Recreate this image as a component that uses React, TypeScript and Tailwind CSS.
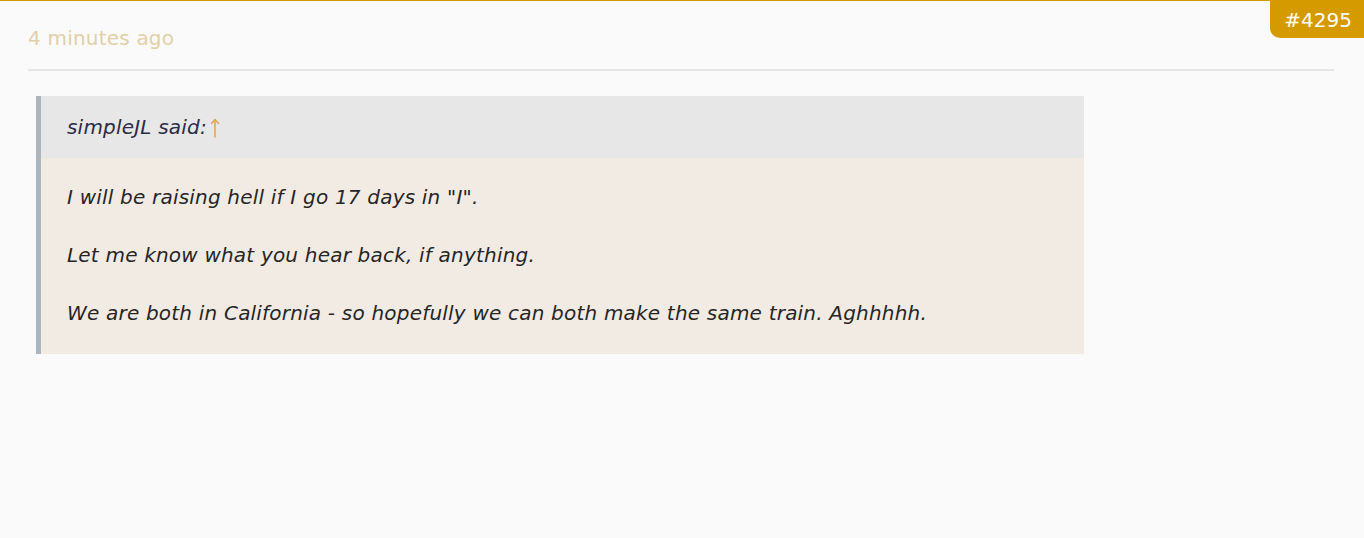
export default function App() {
  return (
    <div className="min-h-[538px] bg-[#fafafa] border-t border-[#d49a00] relative font-['DejaVu_Sans',sans-serif]">
      <div className="absolute right-0 top-0 bg-[#d49a00] text-white text-[20px] leading-none pl-[14px] pr-[12px] pt-[9px] pb-[8px] rounded-bl-[10px]">
        #4295
      </div>
      <div className="pl-7 pr-[30px]">
        <div className="pt-[24px] pb-[18px] border-b-2 border-[#e6e6e6] text-[20px] leading-[26px] text-[#e2cfa6] tracking-[0.2px]">
          4 minutes ago
        </div>
      </div>
      <div className="pl-9 pt-[25px] w-[1084px]">
        <div className="border-l-[5px] border-[#aeb6bd] italic text-[20px] tracking-[0.2px]">
          <div className="bg-[#e7e7e7] h-[62px] flex items-center pl-[26px] text-[#2c2c44]">
            simpleJL said:
            <svg className="ml-[3px] mt-[2px]" width="10" height="20" viewBox="0 0 10 20" fill="none" stroke="#e2a75c" strokeWidth="1.6" strokeLinecap="round" strokeLinejoin="round">
              <path d="M5 1.5V19" />
              <path d="M1.5 5.5L5 1.5L8.5 5.5" />
            </svg>
          </div>
          <div className="bg-[#f2ebe4] pl-[26px] pt-[26px] pb-[28px] text-[#262626] leading-[26px] flex flex-col gap-[32px]">
            <p>I will be raising hell if I go 17 days in "I".</p>
            <p>Let me know what you hear back, if anything.</p>
            <p>We are both in California - so hopefully we can both make the same train. Aghhhhh.</p>
          </div>
        </div>
      </div>
    </div>
  )
}
